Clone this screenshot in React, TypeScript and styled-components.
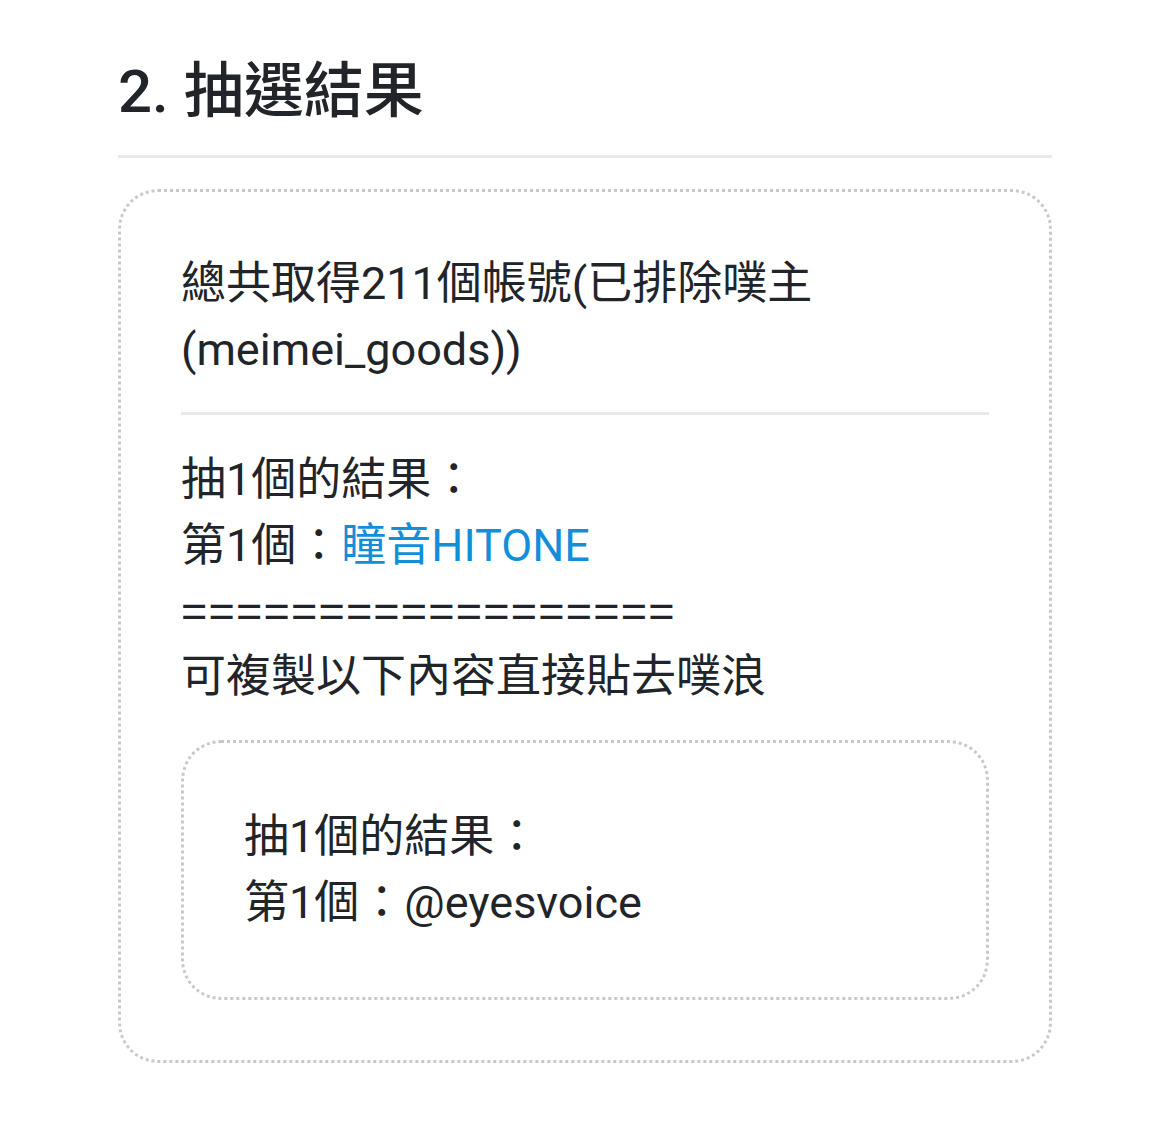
import React from 'react'
import styled, { createGlobalStyle } from 'styled-components'

const GlobalStyle = createGlobalStyle`
    body {
        margin: 0;
        background: #fff;
        font-family: Roboto, "Noto Sans CJK TC", sans-serif;
        color: #212529;
    }
`;

const Page = styled.div`
    width: 934px;
    margin: 0 auto;
    padding: 54px 0 70px;
`;

const Heading = styled.h2`
    margin: 0;
    padding-bottom: 25px;
    font-size: 60px;
    font-weight: 500;
    line-height: 76px;
    border-bottom: 3px solid #e9e9e9;
`;

const Card = styled.div<{ $inset?: boolean }>`
    margin-top: 31px;
    border: 3px dotted #c8c8c8;
    border-radius: 40px;
    padding: ${p => (p.$inset ? '61px 60px 62px' : '59px 60px 60px')};
    font-size: 45px;
    line-height: 65.5px;
`;

const Line = styled.div``;

const Rule = styled.div`
    font-family: "Liberation Sans", sans-serif;
    letter-spacing: 1.2px;
`;

const Divider = styled.hr`
    margin: 30px 0 32px;
    border: 0;
    border-top: 3px solid #e9e9e9;
`;

const Link = styled.a`
    color: #138ed8;
    text-decoration: none;
`;

export default function App() {
    return (
        <>
            <GlobalStyle />
            <Page>
                <Heading>2. 抽選結果</Heading>
                <Card>
                    <Line>總共取得211個帳號(已排除噗主</Line>
                    <Line>(meimei_goods))</Line>
                    <Divider />
                    <Line>抽1個的結果：</Line>
                    <Line>第1個：<Link href="#">瞳音HITONE</Link></Line>
                    <Rule>==================</Rule>
                    <Line>可複製以下內容直接貼去噗浪</Line>
                    <Card $inset>
                        <Line>抽1個的結果：</Line>
                        <Line>第1個：@eyesvoice</Line>
                    </Card>
                </Card>
            </Page>
        </>
    );
}
